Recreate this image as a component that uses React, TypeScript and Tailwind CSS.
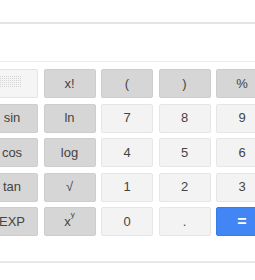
import React from "react";

type Btn = { label: React.ReactNode; kind: "dark" | "light" | "blue" | "grid" };

const rows: Btn[][] = [
  [
    { label: "", kind: "grid" },
    { label: "x!", kind: "dark" },
    { label: "(", kind: "dark" },
    { label: ")", kind: "dark" },
    { label: "%", kind: "dark" },
  ],
  [
    { label: "sin", kind: "dark" },
    { label: "ln", kind: "dark" },
    { label: "7", kind: "light" },
    { label: "8", kind: "light" },
    { label: "9", kind: "light" },
  ],
  [
    { label: "cos", kind: "dark" },
    { label: "log", kind: "dark" },
    { label: "4", kind: "light" },
    { label: "5", kind: "light" },
    { label: "6", kind: "light" },
  ],
  [
    { label: "tan", kind: "dark" },
    { label: "√", kind: "dark" },
    { label: "1", kind: "light" },
    { label: "2", kind: "light" },
    { label: "3", kind: "light" },
  ],
  [
    { label: "EXP", kind: "dark" },
    {
      label: (
        <span className="flex items-start">
          x<span className="text-[8px] leading-none relative -top-[1px]">y</span>
        </span>
      ),
      kind: "dark",
    },
    { label: "0", kind: "light" },
    { label: ".", kind: "light" },
    { label: "=", kind: "blue" },
  ],
];

function GridDots() {
  const dots = [];
  for (let r = 0; r < 6; r++) {
    for (let c = 0; c < 11; c++) {
      dots.push(<rect key={`${r}-${c}`} x={c * 2} y={r * 2} width={1} height={1} fill="#d4d4d4" />);
    }
  }
  return (
    <svg width="22" height="12" viewBox="0 0 22 12" className="absolute left-[13px] top-[6px]">
      {dots}
    </svg>
  );
}

function Key({ b }: { b: Btn }) {
  const base =
    "relative w-[52px] h-[29px] shrink-0 rounded-[2px] border flex items-center justify-center text-[13px] text-[#444]";
  const cls =
    b.kind === "dark"
      ? "bg-[#d6d6d6] border-[#cdcdcd]"
      : b.kind === "light"
      ? "bg-[#f3f3f3] border-[#e6e6e6]"
      : b.kind === "blue"
      ? "bg-[#4285f4] border-[#3b7be8] text-white font-bold text-[16px]"
      : "bg-[#f5f5f5] border-[#e4e4e4]";
  return (
    <div className={`${base} ${cls}`}>
      {b.kind === "grid" ? <GridDots /> : b.label}
    </div>
  );
}

export default function App() {
  return (
    <div
      className="w-[255px] h-[280px] bg-white overflow-hidden"
      style={{ fontFamily: '"Liberation Sans", Arial, sans-serif' }}
    >
      <div className="h-[22px]" />
      <div className="h-[2px] bg-[#e4e4e4]" />
      <div className="h-[37px]" />
      <div className="h-[1px] bg-[#ececec]" />
      <div className="pt-[7px] flex flex-col gap-[5.5px] ml-[-14px]">
        {rows.map((row, i) => (
          <div key={i} className="flex gap-[5.5px]">
            {row.map((b, j) => (
              <Key key={j} b={b} />
            ))}
          </div>
        ))}
      </div>
      <div className="h-[25px]" />
      <div className="h-[2px] bg-[#e8e8e8]" />
    </div>
  );
}
